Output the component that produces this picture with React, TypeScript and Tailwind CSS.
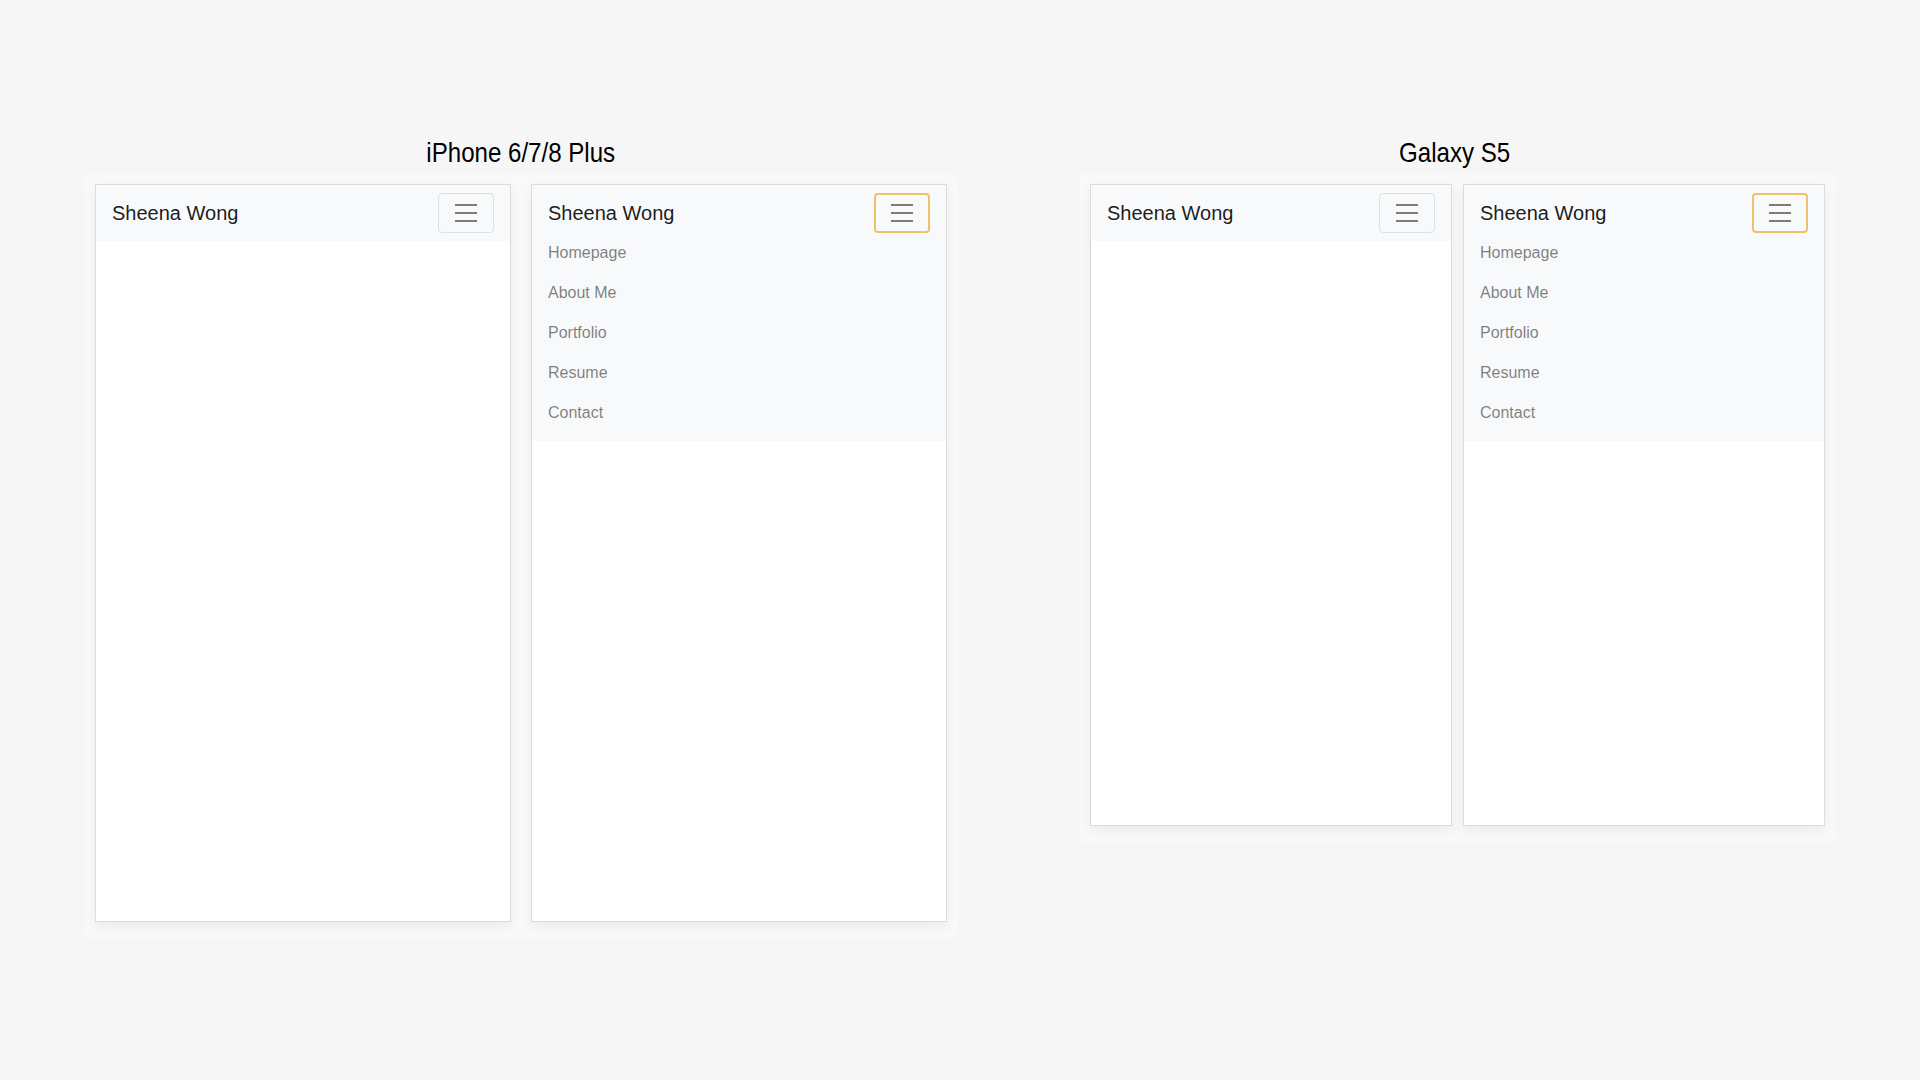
import React from "react";

const Hamburger = () => (
  <svg width="30" height="30" viewBox="0 0 30 30" aria-hidden="true">
    <path d="M4 7h22M4 15h22M4 23h22" stroke="rgba(0,0,0,0.5)" strokeWidth="2" strokeLinecap="butt" fill="none" />
  </svg>
);

const items = ["Homepage", "About Me", "Portfolio", "Resume", "Contact"];

function Frame({ w, h, open }: { w: string; h: string; open: boolean }) {
  return (
    <div className={`${w} ${h} shrink-0 border border-[#dcdcdc] bg-white shadow-[0_5px_12px_rgba(0,0,0,0.06)] flex flex-col`}>
      <nav className="bg-[#f8f9fa] px-4 py-2">
        <div className="flex items-center justify-between">
          <span className="py-[5px] text-[20px] leading-[30px] text-[rgba(0,0,0,0.9)]">Sheena Wong</span>
          {open ? (
            <button className="flex h-[40px] w-[56px] items-center justify-center rounded-[4px] border-2 border-[#efc16c] bg-transparent">
              <Hamburger />
            </button>
          ) : (
            <button className="flex h-[40px] w-[56px] items-center justify-center rounded-[4px] border border-[rgba(0,0,0,0.1)] bg-transparent">
              <Hamburger />
            </button>
          )}
        </div>
        {open && (
          <ul className="flex flex-col">
            {items.map((t) => (
              <li key={t} className="py-2 text-[16px] leading-[24px] text-[rgba(0,0,0,0.5)]">
                {t}
              </li>
            ))}
          </ul>
        )}
      </nav>
    </div>
  );
}

function Title({ children }: { children: React.ReactNode }) {
  return (
    <h2 className="mb-[4px] h-[34px] text-[28px] leading-[34px] text-black">
      <span className="inline-block origin-center scale-x-[0.86]">{children}</span>
    </h2>
  );
}

export default function App() {
  return (
    <div className="min-h-screen w-full bg-[#f6f6f6] font-['Liberation_Sans',Arial,sans-serif]">
      <div className="flex items-start gap-[123px] pl-[85px] pt-[136px]">
        <div className="flex flex-col items-center">
          <Title>iPhone 6/7/8 Plus</Title>
          <div className="flex gap-[20px] bg-[#f9f9f9] px-[10px] pb-[16px] pt-[10px]">
            <Frame w="w-[416px]" h="h-[738px]" open={false} />
            <Frame w="w-[416px]" h="h-[738px]" open={true} />
          </div>
        </div>
        <div className="flex flex-col items-center">
          <div className="-ml-[6px]">
            <Title>Galaxy S5</Title>
          </div>
          <div className="flex gap-[11px] bg-[#f9f9f9] px-[10px] pb-[16px] pt-[10px]">
            <Frame w="w-[362px]" h="h-[642px]" open={false} />
            <Frame w="w-[362px]" h="h-[642px]" open={true} />
          </div>
        </div>
      </div>
    </div>
  );
}
